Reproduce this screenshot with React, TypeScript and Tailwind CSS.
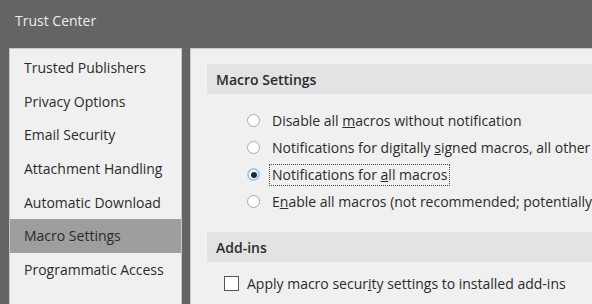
import React from 'react';

const navItems = [
  'Trusted Publishers',
  'Privacy Options',
  'Email Security',
  'Attachment Handling',
  'Automatic Download',
  'Macro Settings',
  'Programmatic Access',
];

const Radio = ({ checked }: { checked?: boolean }) => (
  <span
    className={
      checked
        ? 'w-[13px] h-[13px] rounded-full border-2 border-[#9ccbf1] bg-white flex items-center justify-center shrink-0'
        : 'w-[13px] h-[13px] rounded-full border border-[#a9a9a9] bg-white shrink-0'
    }
  >
    {checked && <span className="w-[6px] h-[6px] rounded-full bg-[#262626]" />}
  </span>
);

const App = () => {
  const options: { label: React.ReactNode; checked?: boolean }[] = [
    { label: <>Disable all <u>m</u>acros without notification</> },
    { label: <>Notifications for digitally <u>s</u>igned macros, all other macros disabled</> },
    { label: <>Notifications for <u>a</u>ll macros</>, checked: true },
    { label: <>E<u>n</u>able all macros (not recommended; potentially dangerous code can run)</> },
  ];

  return (
    <div
      className="w-[592px] h-[304px] overflow-hidden bg-[#646464] flex flex-col text-[14px] text-[#2b2b2b]"
      style={{ fontFamily: '"Open Sans", "Noto Sans", sans-serif' }}
    >
      <div className="h-[48px] shrink-0 pl-[15px] pt-[11px] text-[14px] leading-[20px] text-[#ececec]">
        Trust Center
      </div>

      <div className="flex flex-1 min-h-0 pl-[9px] gap-[8px]">
        <div className="w-[173px] shrink-0 bg-[#f0f0f0] border-l border-t border-r border-[#c8c8c8] pt-[2px]">
          {navItems.map((item) => (
            <div
              key={item}
              className={
                item === 'Macro Settings'
                  ? 'h-[33.6px] flex items-center pl-[14px] bg-[#9e9e9e] whitespace-nowrap'
                  : 'h-[33.6px] flex items-center pl-[14px] whitespace-nowrap'
              }
            >
              {item}
            </div>
          ))}
        </div>

        <div className="flex-1 min-w-0 bg-[#f0f0f0] border-l border-t border-[#c8c8c8] pl-[16px] pt-[15px] whitespace-nowrap overflow-hidden">
          <div className="h-[30px] bg-[#e3e3e3] pl-[9px] flex items-center font-semibold">Macro Settings</div>

          <div className="mt-[13px] pl-[40px]">
            {options.map((o, i) => (
              <div key={i} className="h-[27px] flex items-center">
                <Radio checked={o.checked} />
                <span
                  className={
                    o.checked
                      ? 'ml-[9px] px-[2px] leading-[20px] border border-dotted border-[#444]'
                      : 'ml-[9px] px-[2px] leading-[20px] border border-transparent'
                  }
                >
                  {o.label}
                </span>
              </div>
            ))}
          </div>

          <div className="mt-[17px] h-[30px] bg-[#e3e3e3] pl-[9px] flex items-center font-semibold">Add-ins</div>

          <div className="mt-[10px] h-[22px] pl-[17px] flex items-center">
            <span className="w-[15px] h-[15px] border border-[#555] bg-white shrink-0" />
            <span className="ml-[8px]">
              Apply macro secur<u>i</u>ty settings to installed add-ins
            </span>
          </div>
        </div>
      </div>
    </div>
  );
};

export default App;
